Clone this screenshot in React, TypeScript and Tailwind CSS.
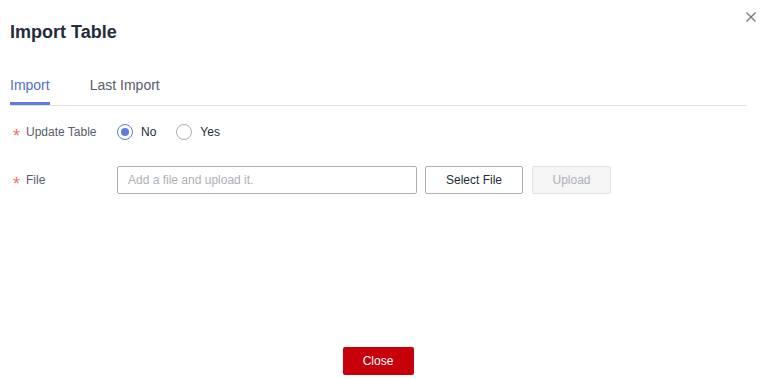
import { useState } from "react";

function Radio({ checked, label, onClick }: { checked: boolean; label: string; onClick: () => void }) {
  return (
    <button type="button" onClick={onClick} className="flex items-center gap-[8px] mr-[20px]">
      <span
        className={
          checked
            ? "w-[16px] h-[16px] rounded-full border border-[#5e7ce0] flex items-center justify-center"
            : "w-[16px] h-[16px] rounded-full border border-[#adb0b8]"
        }
      >
        {checked && <span className="w-[8px] h-[8px] rounded-full bg-[#5e7ce0]" />}
      </span>
      <span className="text-[12px] text-[#252b3a]">{label}</span>
    </button>
  );
}

function Label({ text }: { text: string }) {
  return (
    <div className="w-[107px] flex items-center text-[12px] text-[#575d6c]">
      <span className="w-[16px] pl-[3px] text-[18px] leading-none text-[#f66f6a] translate-y-[4px]">*</span>
      <span>{text}</span>
    </div>
  );
}

export default function App() {
  const [tab, setTab] = useState("import");
  const [update, setUpdate] = useState(false);

  return (
    <div
      className="relative w-[762px] h-[379px] bg-white flex flex-col pl-[10px] pr-[16px]"
      style={{ fontFamily: '"Liberation Sans", Arial, sans-serif' }}
    >
      <button type="button" className="absolute right-[6px] top-[12px] w-[10px] h-[10px] text-[#71757f]">
        <svg viewBox="0 0 10 10" width="10" height="10" fill="none" stroke="currentColor" strokeWidth="1.3">
          <path d="M0.5 0.5 L9.5 9.5 M9.5 0.5 L0.5 9.5" />
        </svg>
      </button>

      <h1 className="pt-[20px] text-[18px] leading-[24px] font-bold text-[#252b3a]">Import Table</h1>

      <div className="mt-[31px] flex gap-[40px] border-b border-[#dfe1e6]">
        {[
          ["import", "Import"],
          ["last", "Last Import"],
        ].map(([key, name]) => (
          <button key={key} type="button" onClick={() => setTab(key)} className="flex flex-col">
            <span
              className={
                tab === key
                  ? "text-[14px] leading-[20px] text-[#526ecc]"
                  : "text-[14px] leading-[20px] text-[#575d6c]"
              }
            >
              {name}
            </span>
            <span className={tab === key ? "mt-[7px] h-[3px] bg-[#5e7ce0]" : "mt-[7px] h-[3px]"} />
          </button>
        ))}
      </div>

      <div className="mt-[12px] h-[28px] flex items-center">
        <Label text="Update Table" />
        <Radio checked={!update} label="No" onClick={() => setUpdate(false)} />
        <Radio checked={update} label="Yes" onClick={() => setUpdate(true)} />
      </div>

      <div className="mt-[20px] h-[28px] flex items-center">
        <Label text="File" />
        <input
          placeholder="Add a file and upload it."
          className="w-[300px] h-[28px] px-[10px] rounded-[2px] border border-[#adb0b8] text-[12px] text-[#252b3a] placeholder:text-[#adb0b8] outline-none"
        />
        <button
          type="button"
          className="ml-[8px] w-[98px] h-[28px] rounded-[2px] border border-[#adb0b8] text-[12px] text-[#252b3a]"
        >
          Select File
        </button>
        <button
          type="button"
          disabled
          className="ml-[9px] w-[79px] h-[28px] rounded-[2px] border border-[#dfe1e6] bg-[#f5f5f6] text-[12px] text-[#adb0b8]"
        >
          Upload
        </button>
      </div>

      <div className="mt-auto mb-[4px] flex justify-center">
        <button type="button" className="w-[71px] h-[28px] rounded-[2px] bg-[#c7000b] text-[12px] font-medium text-white">
          Close
        </button>
      </div>
    </div>
  );
}
